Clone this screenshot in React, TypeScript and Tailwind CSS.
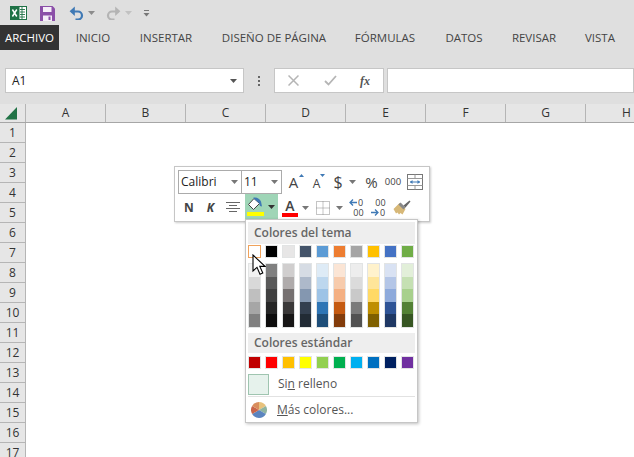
import React from "react";

const FONT = { fontFamily: '"Open Sans", "Noto Sans", sans-serif' };

const TABS = [
  { label: "INICIO", w: "w-[68px]" },
  { label: "INSERTAR", w: "w-[78px]" },
  { label: "DISEÑO DE PÁGINA", w: "w-[138px]" },
  { label: "FÓRMULAS", w: "w-[84px]" },
  { label: "DATOS", w: "w-[74px]" },
  { label: "REVISAR", w: "w-[66px]" },
  { label: "VISTA", w: "w-[66px]" },
];

const COLUMNS = ["A", "B", "C", "D", "E", "F", "G"];
const ROWS = Array.from({ length: 17 }, (_, i) => i + 1);

const THEME_TOP = ["#ffffff", "#000000", "#e7e6e6", "#44546a", "#5b9bd5", "#ed7d31", "#a5a5a5", "#ffc000", "#4472c4", "#70ad47"];

const THEME_SHADES = [
  ["#f2f2f2", "#d9d9d9", "#bfbfbf", "#a6a6a6", "#808080"],
  ["#808080", "#595959", "#404040", "#262626", "#0d0d0d"],
  ["#d0cece", "#afabab", "#767171", "#3a3838", "#171616"],
  ["#d6dce4", "#adb9ca", "#8497b0", "#333f4f", "#222b35"],
  ["#deebf6", "#bdd7ee", "#9dc3e6", "#2e75b5", "#1e4e79"],
  ["#fbe5d5", "#f7cbac", "#f4b083", "#c55a11", "#833c0b"],
  ["#ededed", "#dbdbdb", "#c9c9c9", "#7b7b7b", "#525252"],
  ["#fff2cc", "#fee599", "#ffd965", "#bf8f00", "#7f6000"],
  ["#d9e2f3", "#b4c6e7", "#8eaadb", "#2f5496", "#1f3864"],
  ["#e2efd9", "#c5e0b3", "#a8d08d", "#538135", "#375623"],
];

const STANDARD = ["#c00000", "#ff0000", "#ffc000", "#ffff00", "#92d050", "#00b050", "#00b0f0", "#0070c0", "#002060", "#7030a0"];

function Caret({ className = "" }: { className?: string }) {
  return (
    <svg width="7" height="4" viewBox="0 0 7 4" className={`shrink-0 ${className}`}>
      <path d="M0 0h7L3.5 4z" fill="currentColor" />
    </svg>
  );
}

function QuickAccess() {
  return (
    <div className="flex items-center h-[25px] shrink-0 pl-[10px] pt-[1px]">
      <svg width="17" height="16" viewBox="0 0 17 16">
        <rect x="7" y="1.5" width="9.5" height="13" fill="#fff" stroke="#1f7246" />
        <path d="M10 4.5h5M10 7h5M10 9.5h5M10 12h5M12 2v12" stroke="#1f7246" strokeWidth="0.9" />
        <rect x="0" y="1" width="9.5" height="14" fill="#1f7246" />
        <path d="M2.4 4.5l4.4 7M6.8 4.5l-4.4 7" stroke="#fff" strokeWidth="1.5" />
      </svg>
      <svg width="15" height="15" viewBox="0 0 15 15" className="ml-[13px]">
        <path d="M0 0h12.5L15 2.5V15H0z" fill="#8b4fa8" />
        <rect x="3" y="1" width="8.5" height="5" fill="#f5eef8" />
        <rect x="3" y="9.5" width="9" height="5.5" fill="#f5eef8" />
        <rect x="8.5" y="10.5" width="2" height="3.5" fill="#8b4fa8" />
      </svg>
      <svg width="15" height="14" viewBox="0 0 15 14" className="ml-[14px]">
        <path d="M2.5 5.5H9a4 4 0 0 1 0 8H6.5" fill="none" stroke="#3f79b5" strokeWidth="2.2" />
        <path d="M5.8 0.5v9.4L0.6 5.2z" fill="#3f79b5" />
      </svg>
      <Caret className="ml-[4px] text-[#8c8c8c]" />
      <svg width="15" height="14" viewBox="0 0 15 14" className="ml-[11px]">
        <path d="M12.5 5.5H6a4 4 0 0 0 0 8h2.5" fill="none" stroke="#b4b4b4" strokeWidth="2.2" />
        <path d="M9.2 0.5v9.4l5.2-4.7z" fill="#b4b4b4" />
      </svg>
      <Caret className="ml-[4px] text-[#c2c2c2]" />
      <svg width="7" height="7" viewBox="0 0 7 7" className="ml-[11px] text-[#777]">
        <path d="M1 0.5h5" stroke="currentColor" />
        <path d="M0.5 3h6L3.5 6.5z" fill="currentColor" />
      </svg>
    </div>
  );
}

function RibbonTabs() {
  return (
    <div className="flex items-center h-[25px] shrink-0 text-[11.5px] text-[#444]">
      <div className="w-[59px] h-full flex items-center justify-center bg-[#333] text-white">ARCHIVO</div>
      {TABS.map((t) => (
        <div key={t.label} className={`${t.w} h-full flex items-center justify-center whitespace-nowrap`}>
          {t.label}
        </div>
      ))}
    </div>
  );
}

function FormulaBar() {
  return (
    <div className="flex items-stretch h-[25px] shrink-0 mt-[18px]">
      <div className="ml-[5px] w-[239px] bg-white border border-[#c6c6c6] flex items-center justify-between pl-[6px] pr-[6px] text-[12px] text-[#222]">
        <span>A1</span>
        <Caret className="text-[#555]" />
      </div>
      <div className="w-[30px] flex flex-col items-center justify-center gap-[2px]">
        <span className="w-[2px] h-[2px] bg-[#666]" />
        <span className="w-[2px] h-[2px] bg-[#666]" />
        <span className="w-[2px] h-[2px] bg-[#666]" />
      </div>
      <div className="w-[110px] bg-white border border-[#c6c6c6] flex items-center">
        <svg width="11" height="11" viewBox="0 0 11 11" className="ml-[13px]">
          <path d="M0.5 0.5l10 10M10.5 0.5l-10 10" stroke="#b5b5b5" strokeWidth="1.5" />
        </svg>
        <svg width="13" height="11" viewBox="0 0 13 11" className="ml-[25px]">
          <path d="M1 6l3.5 3.5L12 1" fill="none" stroke="#b5b5b5" strokeWidth="1.8" />
        </svg>
        <span className="ml-[23px] text-[12px] italic font-bold text-[#555]" style={{ fontFamily: '"Liberation Serif", serif' }}>
          fx
        </span>
      </div>
      <div className="ml-[3px] flex-1 bg-white border border-[#c6c6c6]" />
    </div>
  );
}

function Sheet() {
  return (
    <div className="mt-[11px] flex-1 min-h-0 flex flex-col text-[12px] text-[#333]">
      <div className="flex h-[19px] shrink-0 bg-[#e6e6e6] border-b border-[#a6a6a6]">
        <div className="w-[26px] flex items-center justify-center border-r border-[#b5b5b5]">
          <svg width="13" height="13" viewBox="0 0 13 13" className="ml-[-3px]">
            <path d="M12 0v12.5H0z" fill="#217346" />
          </svg>
        </div>
        {COLUMNS.map((c) => (
          <div key={c} className="w-[80px] shrink-0 flex items-center justify-center border-r border-[#b5b5b5]">
            {c}
          </div>
        ))}
        <div className="flex-1 flex items-center pl-[36px]">H</div>
      </div>
      <div className="flex-1 min-h-0 flex overflow-hidden">
        <div className="w-[26px] shrink-0 bg-[#e6e6e6] border-r border-[#b5b5b5]">
          {ROWS.map((r) => (
            <div key={r} className="h-[20px] flex items-center justify-center border-b border-[#b5b5b5]">
              {r}
            </div>
          ))}
        </div>
        <div className="flex-1 bg-white" />
      </div>
    </div>
  );
}

function MiniToolbar() {
  return (
    <div className="absolute left-[174px] top-[166px] w-[256px] h-[56px] bg-white border border-[#c6c6c6] shadow-[1px_1px_2px_rgba(0,0,0,0.2)] pl-[3px] pt-[3px] text-[#444]">
      <div className="flex items-center h-[24px]">
        <div className="w-[64px] h-full border border-[#ababab] flex items-center justify-between pl-[2px] pr-[3px] text-[12px] text-[#222]">
          <span>Calibri</span>
          <Caret className="text-[#777]" />
        </div>
        <div className="w-[40px] h-full border border-l-0 border-[#ababab] flex items-center justify-between pl-[2px] pr-[3px] text-[12px] text-[#222]">
          <span>11</span>
          <Caret className="text-[#777]" />
        </div>
        <div className="w-[23px] flex justify-center text-[15px] leading-none relative">
          A
          <svg width="5" height="3" viewBox="0 0 5 3" className="absolute right-[1px] top-[-1px]">
            <path d="M0 3h5L2.5 0z" fill="#3f79b5" />
          </svg>
        </div>
        <div className="w-[23px] flex justify-center text-[12px] leading-none relative pt-[3px]">
          A
          <svg width="5" height="3" viewBox="0 0 5 3" className="absolute right-[3px] top-[-1px]">
            <path d="M0 0h5L2.5 3z" fill="#3f79b5" />
          </svg>
        </div>
        <div className="w-[20px] flex justify-center text-[16px] leading-none">$</div>
        <Caret className="text-[#777] ml-[1px] mr-[4px]" />
        <div className="w-[23px] flex justify-center text-[15px]">%</div>
        <div className="w-[20px] flex justify-center text-[9.5px]">000</div>
        <svg width="16" height="16" viewBox="0 0 16 16" className="ml-[4px] shrink-0">
          <rect x="0.5" y="0.5" width="15" height="15" fill="#fff" stroke="#777" />
          <path d="M0.5 4.5h15M0.5 11.5h15M8 0.5v4M8 11.5v4" stroke="#999" />
          <path d="M3 8h10" stroke="#3f79b5" />
          <path d="M5.5 6L3 8l2.5 2zM10.5 6L13 8l-2.5 2z" fill="#3f79b5" />
        </svg>
      </div>
      <div className="flex items-center h-[27px]">
        <div className="w-[22px] text-center text-[12px] font-bold">N</div>
        <div className="w-[21px] text-center text-[12px] font-bold italic">K</div>
        <div className="w-[24px] flex justify-center">
          <svg width="14" height="11" viewBox="0 0 14 11">
            <path d="M0 0.5h14M3 3.5h8M0 6.5h14M3 9.5h8" stroke="#666" />
          </svg>
        </div>
        <div className="w-[33px] h-full mt-[-1px] bg-[#9fd5b7] flex items-center pl-[2px] gap-[4px]">
          <svg width="17" height="20" viewBox="0 0 17 20" className="shrink-0">
            <path d="M7 1.5L1.5 7.5l5 5 6-6z" fill="#fff" stroke="#444" />
            <path d="M6 1c3-1.5 7 1 8 3.5l1 5-2-.5-1-3" fill="#3f79b5" />
            <rect x="0" y="15" width="17" height="4" fill="#ffff00" />
          </svg>
          <Caret className="text-[#333]" />
        </div>
        <div className="w-[24px] flex justify-center">
          <div className="flex flex-col items-center text-[14px] leading-[14px] font-semibold">
            A
            <span className="w-[16px] h-[4px] bg-[#ff0000]" />
          </div>
        </div>
        <Caret className="text-[#777] mr-[7px]" />
        <svg width="14" height="14" viewBox="0 0 14 14" className="mr-[6px] shrink-0">
          <path d="M0.5 0.5h13v13h-13zM7 0.5v13M0.5 7h13" fill="none" stroke="#8a8a8a" strokeDasharray="1 1" />
        </svg>
        <Caret className="text-[#777] mr-[2px]" />
        <div className="w-[22px] flex flex-col items-center text-[9px] leading-[10px]">
          <span className="flex items-center gap-[1px]">
            <svg width="8" height="7" viewBox="0 0 8 7">
              <path d="M8 3.5H1M4 0.5l-3 3 3 3" fill="none" stroke="#3f79b5" strokeWidth="1.3" />
            </svg>
            0
          </span>
          <span className="pl-[5px]">00</span>
        </div>
        <div className="w-[22px] flex flex-col items-center text-[9px] leading-[10px]">
          <span className="pl-[5px]">00</span>
          <span className="flex items-center gap-[1px]">
            <svg width="8" height="7" viewBox="0 0 8 7">
              <path d="M0 3.5h7M4 0.5l3 3-3 3" fill="none" stroke="#3f79b5" strokeWidth="1.3" />
            </svg>
            0
          </span>
        </div>
        <svg width="18" height="15" viewBox="0 0 18 15" className="ml-[4px] shrink-0">
          <path d="M0.5 9l6-6 6 6-3 5.5-2-1.5-1.5 1.5-1.5-2-1.5 1z" fill="#d7b878" />
          <path d="M6.5 3.5l5 5" stroke="#888" strokeWidth="3" />
          <path d="M10.5 5.5L16.5 0.5l1 1-5 6z" fill="#666" />
        </svg>
      </div>
    </div>
  );
}

function Swatch({ color, selected }: { color: string; selected?: boolean }) {
  return (
    <span
      className={`block w-[13px] h-[13px] border ${selected ? "border-[#f0a35c]" : "border-[#e2e4e4]"}`}
      style={{ backgroundColor: color }}
    />
  );
}

function ColorMenu() {
  return (
    <div className="absolute left-[245px] top-[219px] w-[173px] h-[204px] bg-white border border-[#c6c6c6] shadow-[1px_1px_3px_rgba(0,0,0,0.25)] p-[2px] text-[12px]">
      <div className="h-[22px] bg-[#eeeeee] flex items-center pl-[6px] font-semibold text-[#666]">Colores del tema</div>
      <div className="flex gap-[4px] mt-[1px]">
        {THEME_TOP.map((c, i) => (
          <Swatch key={c} color={c} selected={i === 0} />
        ))}
      </div>
      <div className="flex gap-[4px] mt-[5px]">
        {THEME_SHADES.map((col) => (
          <div key={col[0]} className="w-[13px] h-[65px] flex flex-col border border-[#e2e4e4]">
            {col.map((c) => (
              <span key={c} className="block flex-1" style={{ backgroundColor: c }} />
            ))}
          </div>
        ))}
      </div>
      <div className="h-[20px] mt-[5px] bg-[#eeeeee] flex items-center pl-[6px] font-semibold text-[#666]">Colores estándar</div>
      <div className="flex gap-[4px] mt-[3px]">
        {STANDARD.map((c) => (
          <Swatch key={c} color={c} />
        ))}
      </div>
      <div className="flex items-center h-[25px] mt-[3px] text-[#555] border-b border-[#e2e2e2]">
        <span className="block w-[21px] h-[21px] bg-[#e6f2ec] border border-[#9fc5b0]" />
        <span className="ml-[9px]">
          Si<span className="underline">n</span> relleno
        </span>
      </div>
      <div className="flex items-center h-[26px] pl-[3px] text-[#555]">
        <svg width="16" height="16" viewBox="0 0 16 16">
          <path d="M8 8V0a8 8 0 0 1 6.9 4z" fill="#e8c27c" />
          <path d="M8 8l6.9-4A8 8 0 0 1 14.9 12z" fill="#8fb4a0" />
          <path d="M8 8l6.9 4A8 8 0 0 1 8 16a8 8 0 0 1-6.9-4z" fill="#5b84bf" />
          <path d="M8 8l-6.9 4a8 8 0 0 1 0-8z" fill="#c9654a" />
          <path d="M8 8L1.1 4A8 8 0 0 1 8 0z" fill="#d98d5c" />
        </svg>
        <span className="ml-[10px]">
          <span className="underline">M</span>ás colores...
        </span>
      </div>
    </div>
  );
}

function Cursor() {
  return (
    <svg width="14" height="22" viewBox="0 0 14 22" className="absolute left-[252px] top-[254px]">
      <path d="M1 1v16l4-3.6 3 6.8 2.8-1.2-3-6.6H13z" fill="#fff" stroke="#000" strokeWidth="1.1" />
    </svg>
  );
}

export default function App() {
  return (
    <div className="relative w-[634px] h-[457px] overflow-hidden bg-[#dfdfdf] flex flex-col" style={FONT}>
      <QuickAccess />
      <RibbonTabs />
      <FormulaBar />
      <Sheet />
      <MiniToolbar />
      <ColorMenu />
      <Cursor />
    </div>
  );
}
